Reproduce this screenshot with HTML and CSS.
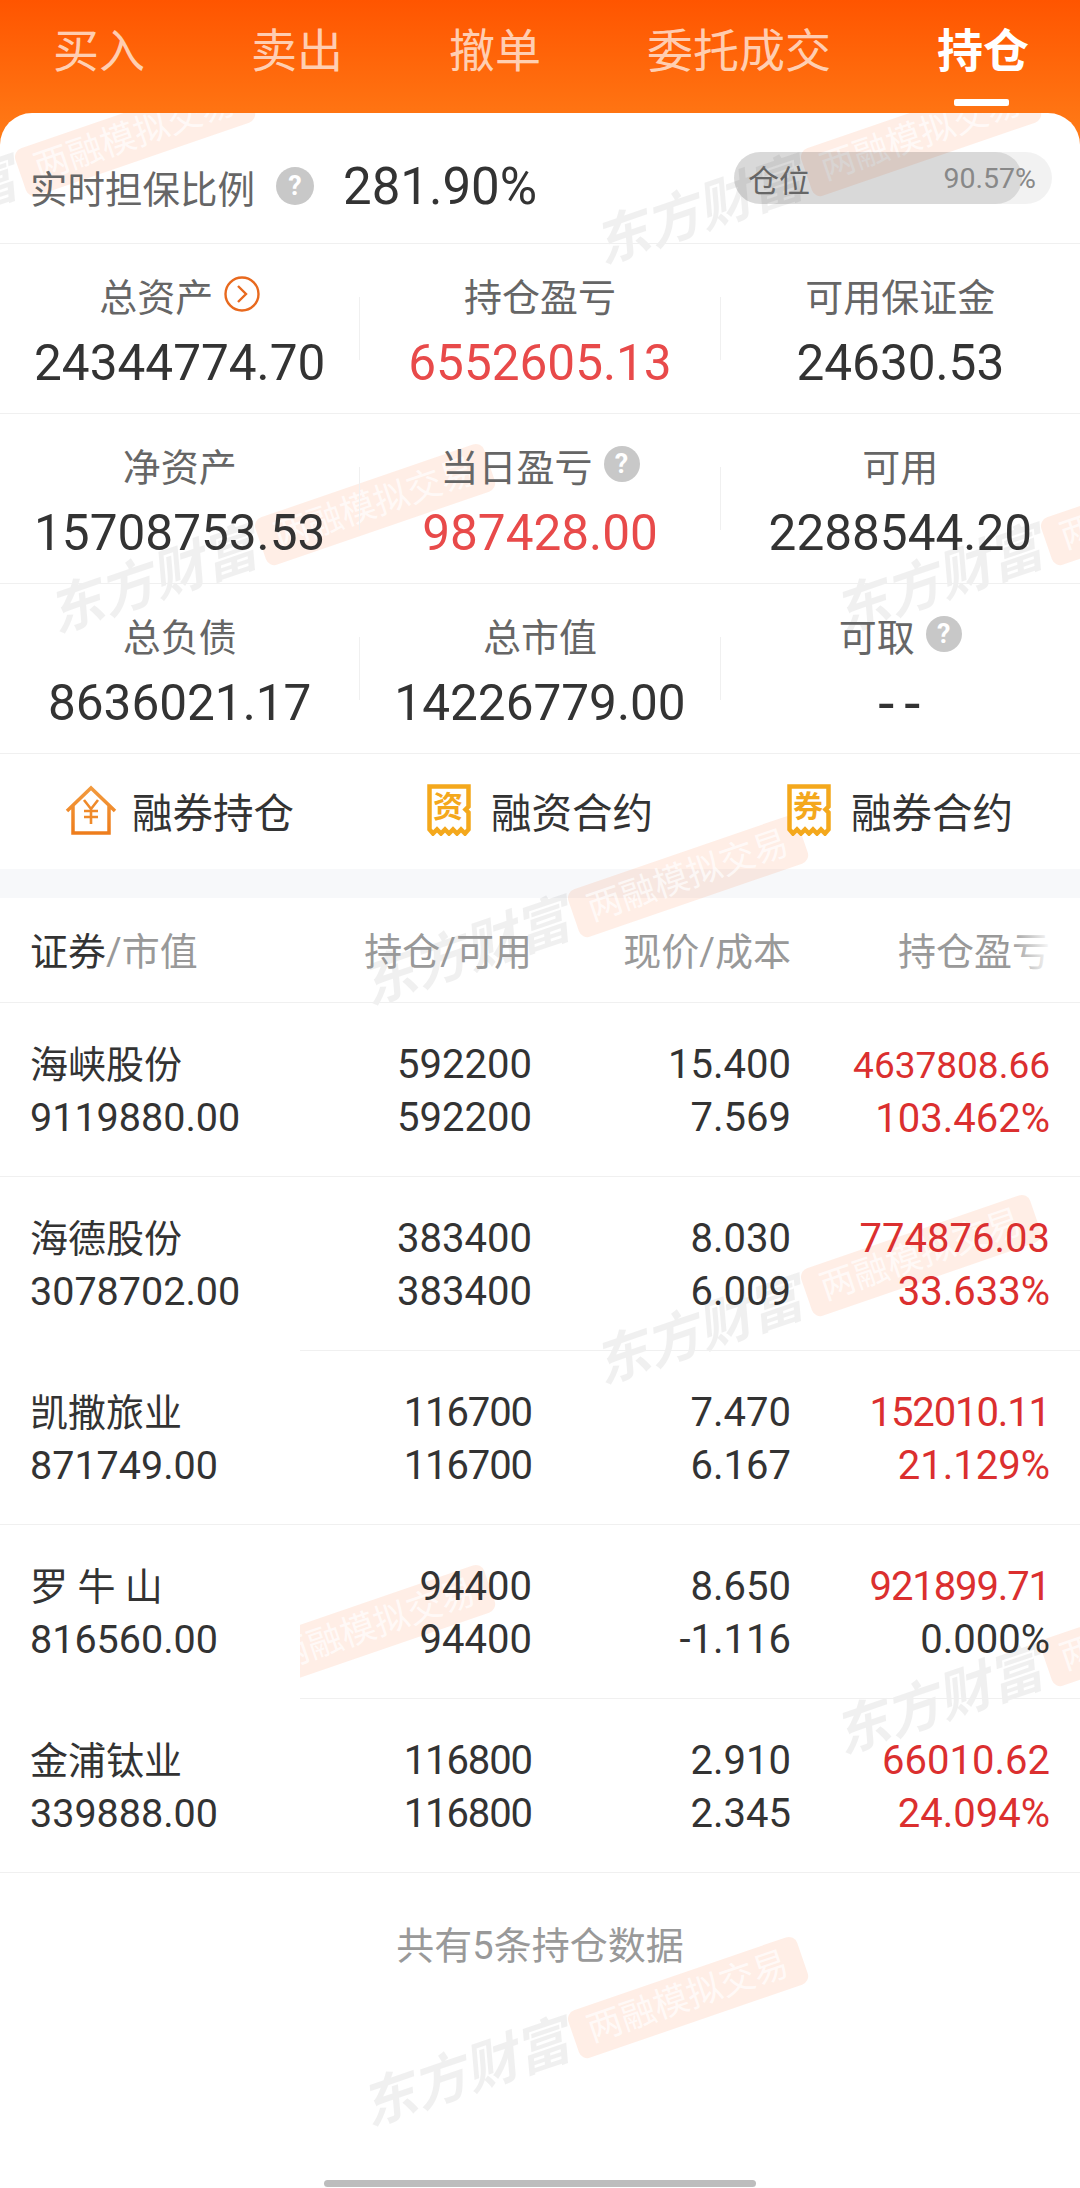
FILE: index.html
```html
<!DOCTYPE html>
<html lang="zh-CN">

<head>
  <meta charset="UTF-8">
  <meta name="viewport" content="width=device-width, initial-scale=1.0">
  <title>持仓</title>
  <link rel="stylesheet" href="styles.css">
</head>

<body>
  <div class="page">
    <div class="tabs">
      <div class="tab">买入</div>
      <div class="tab">卖出</div>
      <div class="tab">撤单</div>
      <div class="tab">委托成交</div>
      <div class="tab tab-active">持仓</div>
    </div>

    <div class="card">
      <div class="ratio">
        <span class="ratio-label">实时担保比例</span>
        <span class="help help-big">?</span>
        <span class="ratio-value">281.90%</span>
        <div class="position">
          <div class="position-fill"></div>
          <span class="position-label">仓位</span>
          <span class="position-value">90.57%</span>
        </div>
      </div>

      <div class="metrics">
        <div class="metric">
          <div class="metric-label">总资产
            <svg class="chevron" viewBox="0 0 36 36">
              <circle cx="18" cy="18" r="16.5" fill="none" stroke="#e8691e" stroke-width="2.4" />
              <path d="M14 10l8 8-8 8" fill="none" stroke="#e8691e" stroke-width="2.4" />
            </svg>
          </div>
          <div class="metric-value">24344774.70</div>
        </div>
        <i class="vline"></i>
        <div class="metric">
          <div class="metric-label">持仓盈亏</div>
          <div class="metric-value red">6552605.13</div>
        </div>
        <i class="vline"></i>
        <div class="metric">
          <div class="metric-label">可用保证金</div>
          <div class="metric-value">24630.53</div>
        </div>
      </div>

      <div class="metrics">
        <div class="metric">
          <div class="metric-label">净资产</div>
          <div class="metric-value">15708753.53</div>
        </div>
        <i class="vline"></i>
        <div class="metric">
          <div class="metric-label">当日盈亏 <span class="help">?</span></div>
          <div class="metric-value red">987428.00</div>
        </div>
        <i class="vline"></i>
        <div class="metric">
          <div class="metric-label">可用</div>
          <div class="metric-value">2288544.20</div>
        </div>
      </div>

      <div class="metrics">
        <div class="metric">
          <div class="metric-label">总负债</div>
          <div class="metric-value">8636021.17</div>
        </div>
        <i class="vline"></i>
        <div class="metric">
          <div class="metric-label">总市值</div>
          <div class="metric-value">14226779.00</div>
        </div>
        <i class="vline"></i>
        <div class="metric">
          <div class="metric-label">可取 <span class="help">?</span></div>
          <div class="metric-value dash">--</div>
        </div>
      </div>

      <div class="links">
        <div class="link link-first">
          <svg class="link-icon" width="52" height="50" viewBox="0 0 52 50">
            <defs>
              <linearGradient id="house" x1="0" y1="0" x2="0" y2="1">
                <stop offset="0" stop-color="#f29a3e" />
                <stop offset="1" stop-color="#ee7d1c" />
              </linearGradient>
            </defs>
            <path d="M2 26L26 3l24 23M8 21v27h36V21" fill="none" stroke="url(#house)" stroke-width="3.5" />
            <path d="M19 15l7 9 7-9M26 24v15M19 26h14M19 32h14" fill="none" stroke="#ef8a2a" stroke-width="2.6" />
          </svg>
          融券持仓
        </div>
        <div class="link link-second">
          <svg class="link-icon" width="46" height="52" viewBox="0 0 46 52">
            <path d="M2.5 2.500h39v20l-3 3 3 3v17l-3.500 4-4-4-4 4-4-4-4 4-4-4-4 4-4-4-4 4-3.500-4z" fill="#fff" stroke="#f4a81c" stroke-width="4.500" />
            <text class="ticket-text" x="21" y="33">资</text>
          </svg>
          融资合约
        </div>
        <div class="link">
          <svg class="link-icon" width="46" height="52" viewBox="0 0 46 52">
            <path d="M2.5 2.500h39v20l-3 3 3 3v17l-3.500 4-4-4-4 4-4-4-4 4-4-4-4 4-4-4-4 4-3.500-4z" fill="#fff" stroke="#f4a81c" stroke-width="4.500" />
            <text class="ticket-text" x="21" y="33">券</text>
          </svg>
          融券合约
        </div>
      </div>

      <div class="band"></div>

      <div class="table">
        <div class="thead">
          <div class="th th-name"><b>证券</b>/市值</div>
          <div class="th">持仓/可用</div>
          <div class="th">现价/成本</div>
          <div class="th">持仓盈亏</div>
          <div class="thead-fade"></div>
        </div>

        <div class="row">
          <div class="cell name"><span class="stock">海峡股份</span><br>9119880.00</div>
          <div class="cell">592200<br>592200</div>
          <div class="cell">15.400<br>7.569</div>
          <div class="cell red-deep"><span class="long">4637808.66</span><br>103.462%</div>
        </div>
        <div class="row row-inset">
          <div class="cell name"><span class="stock">海德股份</span><br>3078702.00</div>
          <div class="cell">383400<br>383400</div>
          <div class="cell">8.030<br>6.009</div>
          <div class="cell red-deep">774876.03<br>33.633%</div>
        </div>
        <div class="row">
          <div class="cell name"><span class="stock">凯撒旅业</span><br>871749.00</div>
          <div class="cell ones">116700<br>116700</div>
          <div class="cell">7.470<br>6.167</div>
          <div class="cell red-deep"><span class="ones">152010.11</span><br>21.129%</div>
        </div>
        <div class="row row-inset">
          <div class="cell name"><span class="stock">罗 牛 山</span><br>816560.00</div>
          <div class="cell">94400<br>94400</div>
          <div class="cell">8.650<br>-1.116</div>
          <div class="cell"><span class="red-deep ones">921899.71</span><br>0.000%</div>
        </div>
        <div class="row">
          <div class="cell name"><span class="stock">金浦钛业</span><br>339888.00</div>
          <div class="cell ones">116800<br>116800</div>
          <div class="cell">2.910<br>2.345</div>
          <div class="cell red-deep">66010.62<br>24.094%</div>
        </div>
      </div>

      <div class="total">共有5条持仓数据</div>
    </div>

    <!-- repeated watermark, painted between the card background and its content -->
    <div class="marks">
      <div class="mark mark-1"><span class="mark-text">东方财富</span><span class="mark-badge">两融模拟交易</span></div>
      <div class="mark mark-2"><span class="mark-text">东方财富</span><span class="mark-badge">两融模拟交易</span></div>
      <div class="mark mark-3"><span class="mark-text">东方财富</span><span class="mark-badge">两融模拟交易</span></div>
      <div class="mark mark-4"><span class="mark-text">东方财富</span><span class="mark-badge">两融模拟交易</span></div>
      <div class="mark mark-5"><span class="mark-text">东方财富</span><span class="mark-badge">两融模拟交易</span></div>
      <div class="mark mark-6"><span class="mark-text">东方财富</span><span class="mark-badge">两融模拟交易</span></div>
      <div class="mark mark-7"><span class="mark-text">东方财富</span><span class="mark-badge">两融模拟交易</span></div>
      <div class="mark mark-8"><span class="mark-text">东方财富</span><span class="mark-badge">两融模拟交易</span></div>
      <div class="mark mark-9"><span class="mark-text">东方财富</span><span class="mark-badge">两融模拟交易</span></div>
    </div>

    <div class="home-bar"></div>
  </div>
</body>

</html>
```

FILE: styles.css
```css
* {
  margin: 0;
  padding: 0;
  box-sizing: border-box;
}

body {
  background: #fff;
  font-family: "Roboto", "Noto Sans CJK SC", sans-serif;
  color: #333;
}

.page {
  position: relative;
  width: 1080px;
  height: 2188px;
  overflow: hidden;
}

/* top tabs */
.tabs {
  display: flex;
  gap: 106px;
  height: 145px;
  padding: 28px 0 0 53px;
  background: linear-gradient(#ff5500, #ff7d18);
}

.tab {
  position: relative;
  font-size: 46px;
  line-height: 46px;
  color: rgba(255, 255, 255, 0.7);
}

.tab-active {
  color: #fff;
  font-weight: bold;
}

.tab-active::after {
  content: "";
  position: absolute;
  left: 17px;
  top: 71px;
  width: 55px;
  height: 7px;
  border-radius: 2px;
  background: #fff;
}

.card {
  margin-top: -32px;
  height: 2075px;
  border-radius: 32px 32px 0 0;
  background: #fff;
}

.ratio,
.metrics,
.links,
.table,
.total {
  position: relative;
  z-index: 1;
}

/* ratio line */
.ratio {
  display: flex;
  align-items: center;
  height: 131px;
  padding: 16px 28px 0 30px;
  border-bottom: 1px solid #f0f0f0;
}

.ratio-label {
  font-size: 37.5px;
  color: #666;
}

.help {
  display: inline-block;
  width: 36px;
  height: 36px;
  border-radius: 50%;
  background: #c8c8c8;
  color: #fff;
  font-size: 27px;
  font-weight: bold;
  line-height: 36px;
  text-align: center;
}

.help-big {
  width: 38px;
  height: 38px;
  margin-left: 21px;
  line-height: 38px;
}

.ratio-value {
  margin-left: 29px;
  font-size: 51px;
}

.position {
  position: relative;
  display: flex;
  align-items: center;
  justify-content: space-between;
  width: 318px;
  height: 52px;
  margin: -16px 0 0 auto;
  padding: 0 16px 0 14px;
  border-radius: 26px;
  background: rgba(0, 0, 0, 0.05);
}

.position-fill {
  position: absolute;
  left: 0;
  top: 0;
  width: 90.57%;
  height: 100%;
  border-radius: 26px;
  background: rgba(0, 0, 0, 0.1);
}

.position-label,
.position-value {
  position: relative;
  color: #666;
  font-size: 31px;
}

.position-value {
  color: #888;
  font-size: 28.5px;
}

/* asset numbers */
.metrics {
  display: flex;
  align-items: center;
  height: 170px;
  border-bottom: 1px solid #f0f0f0;
}

.metric {
  flex: 1;
  padding-top: 7px;
  text-align: center;
}

.metric-label {
  display: flex;
  align-items: center;
  justify-content: center;
  gap: 11px;
  height: 52px;
  font-size: 38px;
  color: #666;
}

.metric-value {
  margin-top: 10px;
  font-size: 49.5px;
  line-height: 66px;
}

.dash {
  padding-left: 8px;
  font-size: 58px;
  letter-spacing: 10px;
}

.red {
  color: #e84a4a;
}

.red-deep {
  color: #db2f2f;
}

.chevron {
  width: 36px;
  height: 36px;
}

.vline {
  width: 1px;
  height: 63px;
  background: #f0f0f0;
}

/* shortcuts */
.links {
  display: flex;
  align-items: center;
  height: 115px;
  padding: 0 0 3px 65px;
  font-size: 40.5px;
}

.link {
  display: flex;
  align-items: center;
  gap: 18px;
}

.link-first {
  width: 362px;
  gap: 15px;
}

.link-second {
  width: 360px;
}

.ticket-text {
  font-family: "Noto Sans CJK SC", sans-serif;
  font-size: 30px;
  font-weight: bold;
  fill: #f4a81c;
  text-anchor: middle;
}

.band {
  height: 29px;
  background: #f7f8fa;
}

/* holdings */
.thead,
.row {
  display: grid;
  grid-template-columns: 300px 232px 259px 289px;
}

.thead {
  position: relative;
  height: 105px;
  padding-bottom: 3px;
  border-bottom: 1px solid #f0f0f0;
}

.th {
  align-self: center;
  font-size: 38px;
  color: #999;
  text-align: right;
}

.th:nth-child(4) {
  padding-right: 30px;
}

.th-name {
  padding-left: 30px;
  text-align: left;
}

.th-name b {
  font-weight: normal;
  color: #333;
}

.thead-fade {
  position: absolute;
  right: 0;
  top: 0;
  bottom: 0;
  width: 70px;
  background: linear-gradient(to right, rgba(255, 255, 255, 0), #fff 60%);
}

.row {
  height: 174px;
}

.cell {
  padding-top: 36px;
  border-bottom: 1px solid #f0f0f0;
  font-size: 40px;
  line-height: 52.5px;
  text-align: right;
}

.cell:nth-child(4) {
  padding-right: 30px;
}

/* the digit 1 is narrow in the original figures */
.ones {
  letter-spacing: -1.1px;
}

.long {
  font-size: 37px;
}

.name {
  position: relative;
  z-index: 2;
  padding-left: 30px;
  background: #fff;
  font-size: 39.5px;
  text-align: left;
}

.stock {
  font-size: 38px;
}

.row-inset .name {
  border-bottom: none;
}

.total {
  padding-top: 42px;
  font-size: 38px;
  color: #999;
  text-align: center;
}

/* watermark */
.marks {
  position: absolute;
  left: 0;
  right: 0;
  top: 113px;
  bottom: 0;
  overflow: hidden;
  pointer-events: none;
}

.mark {
  position: absolute;
  display: flex;
  align-items: center;
  gap: 6px;
  width: 468px;
  height: 50px;
  transform: rotate(-19deg);
}

.mark-text {
  font-size: 54px;
  font-weight: bold;
  font-style: italic;
  line-height: 50px;
  white-space: nowrap;
  color: rgba(0, 0, 0, 0.06);
}

.mark-badge {
  height: 50px;
  padding: 0 16px;
  border-radius: 9px;
  background: rgba(255, 100, 30, 0.11);
  font-size: 35px;
  line-height: 50px;
  white-space: nowrap;
  color: rgba(255, 255, 255, 0.7);
}

.mark-1 { left: -202px; top: 33px; }
.mark-2 { left: 584px; top: 33px; }
.mark-3 { left: 38px; top: 402px; }
.mark-4 { left: 824px; top: 402px; }
.mark-5 { left: 351px; top: 774px; }
.mark-6 { left: 584px; top: 1153px; }
.mark-7 { left: 38px; top: 1523px; }
.mark-8 { left: 824px; top: 1523px; }
.mark-9 { left: 351px; top: 1895px; }

.home-bar {
  position: absolute;
  left: 324px;
  bottom: 1px;
  z-index: 3;
  width: 432px;
  height: 7px;
  border-radius: 4px;
  background: #bdbdbd;
}
```
